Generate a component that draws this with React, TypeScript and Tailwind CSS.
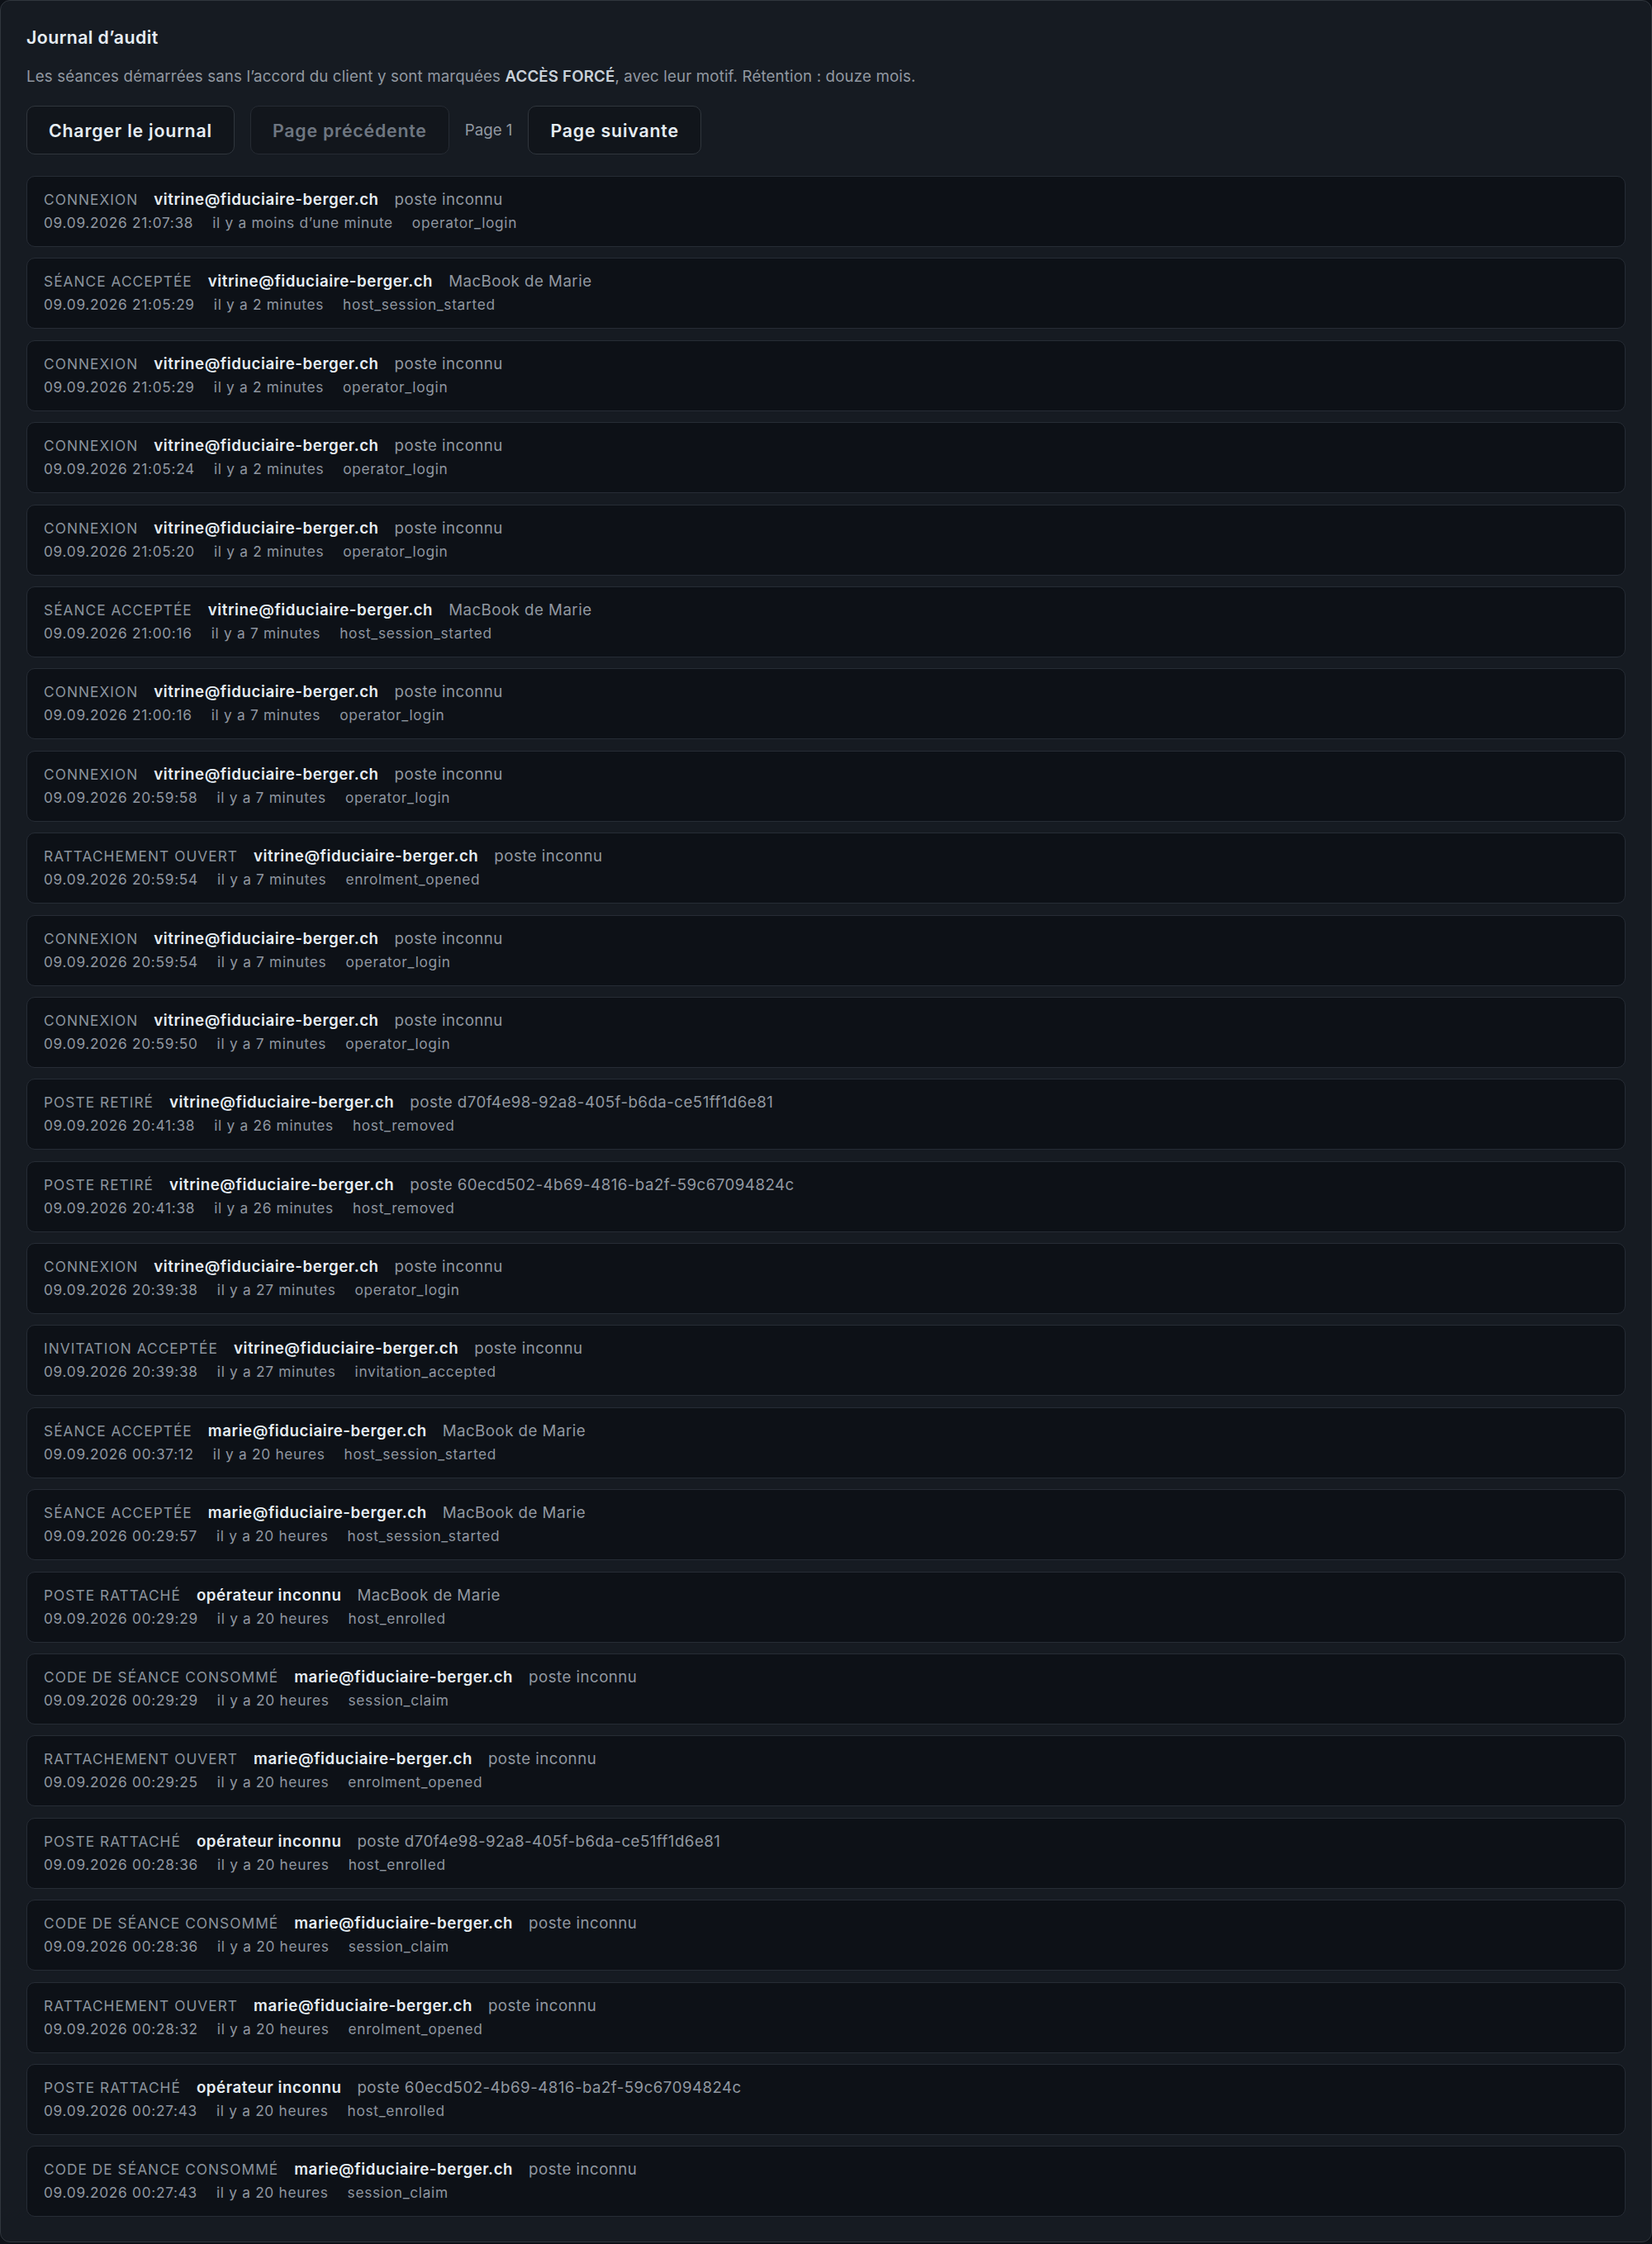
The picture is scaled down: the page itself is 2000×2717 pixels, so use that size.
import React from "react";

type Row = {
  label: string;
  actor: string;
  target: string;
  date: string;
  ago: string;
  code: string;
};

const V = "vitrine@fiduciaire-berger.ch";
const M = "marie@fiduciaire-berger.ch";
const U = "opérateur inconnu";
const PI = "poste inconnu";
const MB = "MacBook de Marie";
const D1 = "poste d70f4e98-92a8-405f-b6da-ce51ff1d6e81";
const D2 = "poste 60ecd502-4b69-4816-ba2f-59c67094824c";
const H20 = "il y a 20 heures";

const rows: Row[] = [
  { label: "Connexion", actor: V, target: PI, date: "09.09.2026 21:07:38", ago: "il y a moins d’une minute", code: "operator_login" },
  { label: "Séance acceptée", actor: V, target: MB, date: "09.09.2026 21:05:29", ago: "il y a 2 minutes", code: "host_session_started" },
  { label: "Connexion", actor: V, target: PI, date: "09.09.2026 21:05:29", ago: "il y a 2 minutes", code: "operator_login" },
  { label: "Connexion", actor: V, target: PI, date: "09.09.2026 21:05:24", ago: "il y a 2 minutes", code: "operator_login" },
  { label: "Connexion", actor: V, target: PI, date: "09.09.2026 21:05:20", ago: "il y a 2 minutes", code: "operator_login" },
  { label: "Séance acceptée", actor: V, target: MB, date: "09.09.2026 21:00:16", ago: "il y a 7 minutes", code: "host_session_started" },
  { label: "Connexion", actor: V, target: PI, date: "09.09.2026 21:00:16", ago: "il y a 7 minutes", code: "operator_login" },
  { label: "Connexion", actor: V, target: PI, date: "09.09.2026 20:59:58", ago: "il y a 7 minutes", code: "operator_login" },
  { label: "Rattachement ouvert", actor: V, target: PI, date: "09.09.2026 20:59:54", ago: "il y a 7 minutes", code: "enrolment_opened" },
  { label: "Connexion", actor: V, target: PI, date: "09.09.2026 20:59:54", ago: "il y a 7 minutes", code: "operator_login" },
  { label: "Connexion", actor: V, target: PI, date: "09.09.2026 20:59:50", ago: "il y a 7 minutes", code: "operator_login" },
  { label: "Poste retiré", actor: V, target: D1, date: "09.09.2026 20:41:38", ago: "il y a 26 minutes", code: "host_removed" },
  { label: "Poste retiré", actor: V, target: D2, date: "09.09.2026 20:41:38", ago: "il y a 26 minutes", code: "host_removed" },
  { label: "Connexion", actor: V, target: PI, date: "09.09.2026 20:39:38", ago: "il y a 27 minutes", code: "operator_login" },
  { label: "Invitation acceptée", actor: V, target: PI, date: "09.09.2026 20:39:38", ago: "il y a 27 minutes", code: "invitation_accepted" },
  { label: "Séance acceptée", actor: M, target: MB, date: "09.09.2026 00:37:12", ago: H20, code: "host_session_started" },
  { label: "Séance acceptée", actor: M, target: MB, date: "09.09.2026 00:29:57", ago: H20, code: "host_session_started" },
  { label: "Poste rattaché", actor: U, target: MB, date: "09.09.2026 00:29:29", ago: H20, code: "host_enrolled" },
  { label: "Code de séance consommé", actor: M, target: PI, date: "09.09.2026 00:29:29", ago: H20, code: "session_claim" },
  { label: "Rattachement ouvert", actor: M, target: PI, date: "09.09.2026 00:29:25", ago: H20, code: "enrolment_opened" },
  { label: "Poste rattaché", actor: U, target: D1, date: "09.09.2026 00:28:36", ago: H20, code: "host_enrolled" },
  { label: "Code de séance consommé", actor: M, target: PI, date: "09.09.2026 00:28:36", ago: H20, code: "session_claim" },
  { label: "Rattachement ouvert", actor: M, target: PI, date: "09.09.2026 00:28:32", ago: H20, code: "enrolment_opened" },
  { label: "Poste rattaché", actor: U, target: D2, date: "09.09.2026 00:27:43", ago: H20, code: "host_enrolled" },
  { label: "Code de séance consommé", actor: M, target: PI, date: "09.09.2026 00:27:43", ago: H20, code: "session_claim" },
];

function Btn({ children, disabled }: { children: React.ReactNode; disabled?: boolean }) {
  return (
    <button
      type="button"
      className={
        disabled
          ? "h-[59px] px-[26px] rounded-[10px] border border-[#262b33] bg-[#12161c] text-[21.3px] font-semibold leading-[32px] tracking-[0.038em] text-[#6e7681]"
          : "h-[59px] px-[26px] rounded-[10px] border border-[#30363d] bg-[#11151b] text-[21.3px] font-semibold leading-[32px] tracking-[0.038em] text-[#e6edf3]"
      }
    >
      {children}
    </button>
  );
}

export default function App() {
  return (
    <div className="min-h-[2717px] bg-[#0d1117] font-['Inter','Noto_Sans',sans-serif] antialiased">
      <div className="rounded-[12px] border border-[#30363d] bg-[#161b22] px-[31px] pt-[28px] pb-[30px]">
        <h2 className="text-[21.3px] leading-[32px] font-semibold tracking-[0.02em] text-[#e6edf3]">Journal d’audit</h2>
        <p className="mt-[18px] text-[18.7px] leading-[28px] tracking-[0.008em] text-[#9198a1]">
          Les séances démarrées sans l’accord du client y sont marquées{" "}
          <strong className="font-semibold text-[#c9d1d9]">ACCÈS FORCÉ</strong>, avec leur motif. Rétention : douze mois.
        </p>
        <div className="mt-[21px] flex items-center gap-[19px]">
          <Btn>Charger le journal</Btn>
          <Btn disabled>Page précédente</Btn>
          <span className="text-[18.7px] leading-[28px] text-[#9198a1]">Page 1</span>
          <Btn>Page suivante</Btn>
        </div>
        <ul className="mt-[26px] flex flex-col gap-[13.4px]">
          {rows.map((r, i) => (
            <li
              key={i}
              className="rounded-[10px] border border-[#262c35] bg-[#0d1117] px-[20px] py-[14px]"
            >
              <div className="flex items-baseline gap-x-[19px] leading-[28px]">
                <span className="text-[17.3px] uppercase tracking-[0.06em] text-[#8b949e]">{r.label}</span>
                <span className="text-[18.7px] font-semibold tracking-[0.03em] text-[#e6edf3]">{r.actor}</span>
                <span className="text-[18.7px] tracking-[0.025em] text-[#9198a1]">{r.target}</span>
              </div>
              <div className="flex items-baseline gap-x-[23px] text-[17.3px] leading-[28px] tracking-[0.04em] text-[#8f96a0]">
                <span>{r.date}</span>
                <span>{r.ago}</span>
                <span>{r.code}</span>
              </div>
            </li>
          ))}
        </ul>
      </div>
    </div>
  );
}
